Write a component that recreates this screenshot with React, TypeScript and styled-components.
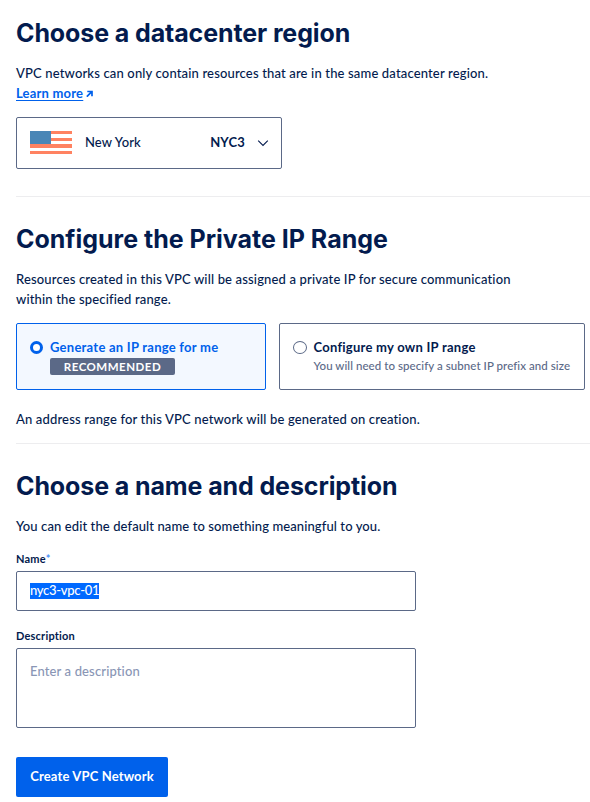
import React from "react";
import styled, { createGlobalStyle, css } from "styled-components";

const ink = "#031b4e";
const slate = "#5b6987";
const blue = "#0061eb";

const GlobalStyle = createGlobalStyle`
  * { box-sizing: border-box; }
  body {
    margin: 0;
    background: #fff;
    color: ${ink};
    font: 500 13px/20px Lato, "Liberation Sans", sans-serif;
    letter-spacing: 0.155px;
  }
`;

const Page = styled.main`
  display: flex;
  flex-direction: column;
  height: 802px;
  padding: 18px 0 0 16px;
  overflow: hidden;
`;

const Section = styled.section`
  display: flex;
  flex-direction: column;
  align-items: flex-start;
`;

const Heading = styled.h2<{ $spacing?: number }>`
  margin: 0 0 15px;
  font: 700 25px/30px Inter, sans-serif;
  letter-spacing: ${(p) => p.$spacing ?? -0.11}px;
  white-space: nowrap;
`;

const Text = styled.p<{ $spacing?: number }>`
  margin: 0;
  letter-spacing: ${(p) => p.$spacing ?? 0.155}px;
  white-space: nowrap;
`;

const Divider = styled.hr<{ $above: number }>`
  width: 100%;
  flex: none;
  height: 1px;
  margin: ${(p) => p.$above}px 0 27px;
  border: 0;
  background: #ededef;
`;

const Link = styled.a`
  display: inline-flex;
  align-items: center;
  gap: 3px;
  height: 20px;
  color: ${blue};
  font-weight: 700;
  letter-spacing: 0.2px;
  text-decoration: none;
`;

const LinkLabel = styled.span`
  text-decoration: underline;
  text-decoration-thickness: 1px;
  text-underline-offset: 2px;
`;

const RegionSelect = styled.button`
  display: flex;
  align-items: center;
  width: 266px;
  height: 52px;
  margin-top: 14px;
  padding: 0 12px 1px 13px;
  border: 1px solid ${slate};
  border-radius: 2px;
  background: #fff;
  color: ${ink};
  font: inherit;
  letter-spacing: 0.12px;
`;

const RegionName = styled.span`
  flex: 1;
  margin-left: 13px;
  padding-bottom: 1px;
  text-align: left;
`;

const RegionCode = styled.span`
  margin-right: 12px;
  padding-bottom: 1px;
  font-weight: 700;
  letter-spacing: 0.2px;
`;

const Options = styled.div`
  display: flex;
  gap: 13px;
  margin: 14px 0 19px;
`;

const OptionCard = styled.label<{ $selected?: boolean; $width: number }>`
  display: flex;
  width: ${(p) => p.$width}px;
  height: 67px;
  padding: 13px 0 0 13px;
  border: 1px solid ${(p) => (p.$selected ? blue : slate)};
  border-radius: 2px;
  background: ${(p) => (p.$selected ? "#f3f8ff" : "#fff")};
`;

const Radio = styled.span<{ $selected?: boolean }>`
  flex: none;
  width: 14px;
  height: 13px;
  margin: 4px 6.5px 0 0;
  border: 1px solid ${slate};
  border-radius: 50%;
  background: #fff;
  ${(p) =>
    p.$selected
      ? css`
          width: 13px;
          margin-right: 7px;
          border: 3px solid ${blue};
        `
      : ""}
`;

const OptionBody = styled.span`
  display: flex;
  flex-direction: column;
  align-items: flex-start;
  white-space: nowrap;
`;

const OptionTitle = styled.span<{ $selected?: boolean }>`
  color: ${(p) => (p.$selected ? blue : ink)};
  font-weight: 700;
  letter-spacing: 0.25px;
`;

const OptionHint = styled.span`
  color: ${slate};
  font-size: 11.5px;
  font-weight: 500;
  line-height: 17px;
  letter-spacing: 0.06px;
`;

const Badge = styled.span`
  width: 125px;
  height: 17px;
  margin-top: 1px;
  border-radius: 2px;
  background: ${slate};
  color: #fff;
  font-size: 11.5px;
  font-weight: 700;
  line-height: 18px;
  letter-spacing: 0.5px;
  text-align: center;
`;

const FieldLabel = styled.label`
  margin: 15px 0 4px;
  font-size: 11px;
  font-weight: 700;
  line-height: 16px;
  letter-spacing: 0.2px;

  & ~ & {
    margin-top: 17px;
  }
`;

const Required = styled.span`
  color: #4d90f7;
  letter-spacing: 0;
`;

const Field = styled.div<{ $height: number }>`
  width: 400px;
  height: ${(p) => p.$height}px;
  padding: 11px 13px;
  border: 1px solid ${slate};
  border-radius: 2px;
  line-height: 16px;
`;

const SelectedValue = styled.span`
  display: block;
  width: 69px;
  background: #0069ff;
  color: #fff;
  line-height: 15px;
  padding-bottom: 1px;
  letter-spacing: -0.28px;
  white-space: nowrap;
`;

const Placeholder = styled.span`
  display: block;
  margin-top: 3px;
  color: #8a96b5;
  font-weight: 500;
  letter-spacing: 0.13px;
`;

const SubmitButton = styled.button`
  width: 152px;
  height: 40px;
  margin-top: 29px;
  padding: 0 0 2px;
  border: 0;
  border-radius: 2px;
  background: ${blue};
  color: #fff;
  font: inherit;
  font-weight: 700;
  letter-spacing: 0.14px;
`;

const Flag = () => (
  <svg width="42" height="23" viewBox="0 0 42 23" shapeRendering="crispEdges">
    <path fill="#ff8261" d="M0 0h42v3H0zM0 7h42v3H0zM0 13h42v4H0zM0 20h42v3H0z" />
    <path fill="#fff" d="M0 17h42v3H0z" />
    <path fill="#4a86b6" d="M0 0h21v13H0z" />
  </svg>
);

const ArrowOut = () => (
  <svg width="8" height="8" viewBox="0 0 8 8" fill="none" stroke={blue} strokeWidth="1.7">
    <path d="M1.3 2.5h4.7v4.7M5.8 2.7.8 7.7" />
  </svg>
);

const Chevron = () => (
  <svg width="12" height="8" viewBox="0 0 12 8" fill="none" stroke={ink} strokeWidth="1.1">
    <path d="m1.2 1.6 4.8 4.8 4.8-4.8" />
  </svg>
);

export default function App() {
  return (
    <>
      <GlobalStyle />
      <Page>
        <Section>
          <Heading>Choose a datacenter region</Heading>
          <Text>VPC networks can only contain resources that are in the same datacenter region.</Text>
          <Link>
            <LinkLabel>Learn more</LinkLabel>
            <ArrowOut />
          </Link>
          <RegionSelect>
            <Flag />
            <RegionName>New York</RegionName>
            <RegionCode>NYC3</RegionCode>
            <Chevron />
          </RegionSelect>
        </Section>
        <Divider $above={27} />
        <Section>
          <Heading $spacing={-0.01}>Configure the Private IP Range</Heading>
          <Text>
            Resources created in this VPC will be assigned a private IP for secure communication
            <br />
            within the specified range.
          </Text>
          <Options>
            <OptionCard $selected $width={250}>
              <Radio $selected />
              <OptionBody>
                <OptionTitle $selected>Generate an IP range for me</OptionTitle>
                <Badge>RECOMMENDED</Badge>
              </OptionBody>
            </OptionCard>
            <OptionCard $width={306}>
              <Radio />
              <OptionBody>
                <OptionTitle>Configure my own IP range</OptionTitle>
                <OptionHint>You will need to specify a subnet IP prefix and size</OptionHint>
              </OptionBody>
            </OptionCard>
          </Options>
          <Text>An address range for this VPC network will be generated on creation.</Text>
        </Section>
        <Divider $above={14} />
        <Section>
          <Heading>Choose a name and description</Heading>
          <Text $spacing={0.1}>You can edit the default name to something meaningful to you.</Text>
          <FieldLabel>
            Name<Required>*</Required>
          </FieldLabel>
          <Field $height={40}>
            <SelectedValue>nyc3-vpc-01</SelectedValue>
          </Field>
          <FieldLabel>Description</FieldLabel>
          <Field $height={80}>
            <Placeholder>Enter a description</Placeholder>
          </Field>
          <SubmitButton>Create VPC Network</SubmitButton>
        </Section>
      </Page>
    </>
  );
}
